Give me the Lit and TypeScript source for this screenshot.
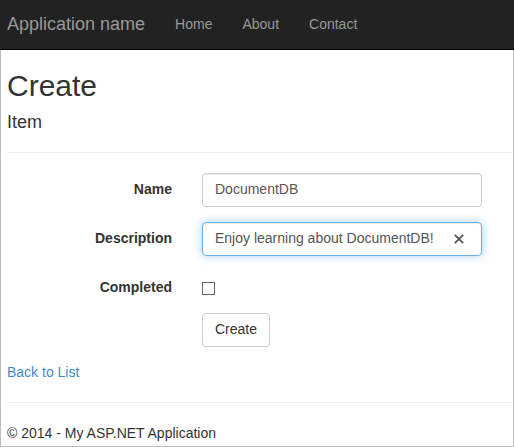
import { LitElement, html, css } from "lit";
import { customElement, state } from "lit/decorators.js";

@customElement("app-root")
export class AppRoot extends LitElement {
  @state() private name = "DocumentDB";
  @state() private description = "Enjoy learning about DocumentDB!";

  static styles = css`
    :host {
      display: block;
      min-height: 100vh;
      box-sizing: border-box;
      background: #fff;
      color: #333;
      font: 14px/20px "Liberation Sans", Arial, sans-serif;
    }
    * {
      box-sizing: border-box;
    }
    .navbar {
      display: flex;
      align-items: center;
      gap: 30px;
      padding: 14px 7px 15px;
      background: #222;
      border-bottom: 1px solid #000;
    }
    .navbar a {
      color: #999;
      text-decoration: none;
    }
    .navbar .brand {
      font-size: 18px;
    }
    .page {
      padding: 19px 0 3px 6px;
      border: 1px solid #bbb;
      border-top: 0;
    }
    h2 {
      margin: 0 0 10px;
      font-size: 30px;
      line-height: 33px;
      font-weight: 400;
    }
    h4 {
      margin: 0;
      font-size: 18px;
      line-height: 20px;
      font-weight: 400;
    }
    hr {
      margin: 20px 0;
      border: 0;
      border-top: 1px solid #eee;
    }
    .form {
      display: grid;
      grid-template-columns: 165px minmax(0, 280px);
      gap: 15px 30px;
      margin-bottom: 15px;
    }
    label {
      padding-top: 6px;
      text-align: right;
      font-weight: 700;
    }
    .field {
      display: flex;
      align-items: center;
      height: 34px;
      padding: 0 12px;
      border: 1px solid #ccc;
      border-radius: 4px;
      box-shadow: inset 0 1px 1px rgba(0, 0, 0, 0.075);
    }
    .field.active {
      border-color: #66afe9;
      box-shadow: inset 0 1px 1px rgba(0, 0, 0, 0.075), 0 0 8px rgba(102, 175, 233, 0.6);
    }
    .field input {
      flex: 1;
      min-width: 0;
      height: 30px;
      padding: 0 0 2px;
      border: 0;
      outline: 0;
      background: none;
      color: #555;
      font: inherit;
    }
    .clear {
      display: flex;
      padding: 5px;
      border: 0;
      background: none;
    }
    .check {
      display: flex;
      align-items: flex-end;
      height: 27px;
      padding-bottom: 3px;
    }
    .check input {
      appearance: none;
      width: 13px;
      height: 13px;
      margin: 0;
      border: 1px solid #666;
      background: #fff;
    }
    .check input:checked {
      background: #666;
    }
    .submit {
      grid-column: 2;
      justify-self: start;
      height: 34px;
      padding: 0 12px 2px;
      border: 1px solid #ccc;
      border-radius: 4px;
      background: #fff;
      color: #333;
      font: inherit;
    }
    .back {
      display: block;
      width: fit-content;
      color: #428bca;
      text-decoration: none;
    }
    footer {
      display: block;
    }
  `;

  private onInput(key: "name" | "description", e: Event) {
    this[key] = (e.target as HTMLInputElement).value;
  }

  render() {
    return html`
      <nav class="navbar">
        <a class="brand" href="#">Application name</a>
        <a href="#home">Home</a>
        <a href="#about">About</a>
        <a href="#contact">Contact</a>
      </nav>
      <div class="page">
        <h2>Create</h2>
        <h4>Item</h4>
        <hr />
        <form class="form" @submit=${(e: Event) => e.preventDefault()}>
          <label for="name">Name</label>
          <div class="field">
            <input id="name" type="text" .value=${this.name}
              @input=${(e: Event) => this.onInput("name", e)} />
          </div>
          <label for="description">Description</label>
          <div class="field active">
            <input id="description" type="text" .value=${this.description}
              @input=${(e: Event) => this.onInput("description", e)} />
            <button class="clear" type="button" aria-label="Clear"
              @click=${() => (this.description = "")}>
              <svg width="10" height="10" viewBox="0 0 10 10" fill="none" stroke="#555" stroke-width="1.8">
                <path d="M.8.8 9.2 9.2M9.2.8.8 9.2" />
              </svg>
            </button>
          </div>
          <label for="completed">Completed</label>
          <div class="check"><input id="completed" type="checkbox" /></div>
          <button class="submit" type="submit">Create</button>
        </form>
        <a class="back" href="#list">Back to List</a>
        <hr />
        <footer>© 2014 - My ASP.NET Application</footer>
      </div>
    `;
  }
}
